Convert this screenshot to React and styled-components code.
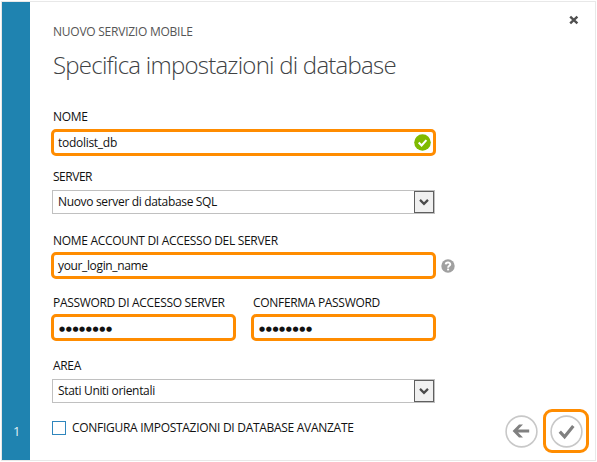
import React from 'react';
import styled, { createGlobalStyle } from 'styled-components';

const GlobalStyle = createGlobalStyle`
  *, *::before, *::after { box-sizing: border-box; }
  body {
    margin: 0;
    background: #fff;
    color: #111;
    font: 12px/16px "Open Sans", "Noto Sans", sans-serif;
    letter-spacing: -0.29px;
  }
  svg { flex: none; }
`;

const Dialog = styled.main`
  display: grid;
  grid-template-columns: 28px 426px 1fr;
  width: 595px;
  height: 460px;
  margin: 1px;
  border: 1px solid #e8e8e8;
`;

const StepRail = styled.aside`
  display: flex;
  align-items: flex-end;
  justify-content: center;
  padding: 0 0 21px 1px;
  background: #1f83b0;
  color: #e2f0f6;
  font-size: 13px;
`;

const Form = styled.form`
  padding: 22px 0 0 21px;
`;

const Eyebrow = styled.div`
  padding-left: 2px;
  color: #555;
  letter-spacing: -0.24px;
`;

const Title = styled.h1`
  margin: 9px 0 28px;
  padding-left: 2px;
  color: #404244;
  font-size: 24px;
  font-weight: 300;
  line-height: 32px;
  letter-spacing: -0.76px;
  white-space: nowrap;
`;

const Group = styled.div`
  display: flex;
  flex-direction: column;
  gap: ${(p) => p.$gap}px;
  width: ${(p) => p.$width || 385}px;
  margin-top: ${(p) => p.$top || 0}px;
`;

const Columns = styled.div`
  display: flex;
  gap: 15px;
  margin-top: 16px;
`;

const Label = styled.label`
  padding-left: 2px;
  white-space: nowrap;
  letter-spacing: ${(p) => p.$tracking || -0.31}px;
`;

const FieldRow = styled.div`
  display: flex;
  align-items: center;
  gap: 5px;
`;

const Field = styled.div`
  display: flex;
  flex: none;
  align-items: center;
  justify-content: space-between;
  width: 100%;
  height: 27px;
  padding: 0 2px 0 4px;
  border: 3px solid #ff8c00;
  border-radius: 5px;
  letter-spacing: ${(p) => p.$tracking || -0.28}px;
`;

const Dots = styled.span`
  padding: 2px 0 0 1px;
  font: 7px/20px "DejaVu Sans", sans-serif;
  letter-spacing: 0.6px;
`;

const Select = styled.div`
  display: flex;
  justify-content: space-between;
  width: 383px;
  height: 24px;
  margin-left: 1px;
  padding-left: 5px;
  border: 1px solid #c0c0c0;
  line-height: 21px;
  letter-spacing: -0.33px;
`;

const DropButton = styled.span`
  display: grid;
  place-items: center;
  width: 20px;
  height: 22px;
  border: 1px solid #5f5f5f;
  background: #f0f0f0;
`;

const CheckRow = styled.div`
  display: flex;
  gap: 6px;
  margin-top: 17px;
  padding-left: 1px;
  white-space: nowrap;
`;

const Checkbox = styled.span`
  width: 14px;
  height: 14px;
  margin-top: 1px;
  border: 1px solid #2f86bd;
`;

const Controls = styled.div`
  display: flex;
  flex-direction: column;
  align-items: flex-end;
  justify-content: space-between;
  padding: 13px 6px 7px 0;
`;

const CloseButton = styled.span`
  display: flex;
  margin-right: 10px;
`;

const Navigation = styled.div`
  display: flex;
  align-items: center;
  gap: 5px;
`;

const Highlight = styled.div`
  display: grid;
  place-items: center;
  width: 46px;
  height: 44px;
  border: 3px solid #ff8c00;
  border-radius: 9px;
`;

const ValidIcon = () => (
  <svg width="17" height="17" viewBox="0 0 17 17">
    <circle cx="8.5" cy="8.5" r="8.3" fill="#7fba00" />
    <path d="M4.7 8.5l2.9 2.9 4.8-5.3" fill="none" stroke="#fff" strokeWidth="2.1" />
  </svg>
);

const HelpIcon = () => (
  <svg width="14" height="14" viewBox="0 0 14 14">
    <circle cx="7" cy="7" r="6.7" fill="#a0a0a0" />
    <path d="M4.7 5.4C4.8 2.9 9.3 2.9 9.3 5.3 9.3 6.8 7.1 6.8 7.1 8.7" fill="none" stroke="#fff" strokeWidth="1.9" />
    <path d="M6.1 9.6h2v1.8h-2z" fill="#fff" />
  </svg>
);

const Chevron = () => (
  <svg width="10" height="8" viewBox="0 0 10 8">
    <path d="M1 1.9l4 4 4-4" fill="none" stroke="#4a4a4a" strokeWidth="2.2" />
  </svg>
);

const CloseIcon = () => (
  <svg width="10" height="10" viewBox="0 0 10 10">
    <path d="M1.2 1.6l7.2 6.8M8.4 1.6l-7.2 6.8" stroke="#505050" strokeWidth="2.4" />
  </svg>
);

const RoundIcon = ({ children }) => (
  <svg width="33" height="33" viewBox="0 0 33 33" fill="none">
    <circle cx="16.5" cy="16.5" r="15.4" stroke="#c8c8c8" strokeWidth="1.6" />
    {children}
  </svg>
);

function Picker({ value }) {
  return (
    <Select>
      <span>{value}</span>
      <DropButton><Chevron /></DropButton>
    </Select>
  );
}

export default function App() {
  return (
    <>
      <GlobalStyle />
      <Dialog>
        <StepRail>1</StepRail>
        <Form>
          <Eyebrow>NUOVO SERVIZIO MOBILE</Eyebrow>
          <Title>Specifica impostazioni di database</Title>
          <Group $gap={4}>
            <Label>NOME</Label>
            <Field>todolist_db<ValidIcon /></Field>
          </Group>
          <Group $gap={5} $top={13}>
            <Label $tracking={-0.48}>SERVER</Label>
            <Picker value="Nuovo server di database SQL" />
          </Group>
          <Group $gap={3} $top={19}>
            <Label>NOME ACCOUNT DI ACCESSO DEL SERVER</Label>
            <FieldRow>
              <Field $tracking={-0.36}>your_login_name</Field>
              <HelpIcon />
            </FieldRow>
          </Group>
          <Columns>
            <Group $gap={3} $width={185}>
              <Label>PASSWORD DI ACCESSO SERVER</Label>
              <FieldRow><Field><Dots>●●●●●●●●</Dots></Field></FieldRow>
            </Group>
            <Group $gap={3} $width={185}>
              <Label>CONFERMA PASSWORD</Label>
              <FieldRow><Field><Dots>●●●●●●●●</Dots></Field></FieldRow>
            </Group>
          </Columns>
          <Group $gap={5} $top={17}>
            <Label>AREA</Label>
            <Picker value="Stati Uniti orientali" />
          </Group>
          <CheckRow>
            <Checkbox />
            <span>CONFIGURA IMPOSTAZIONI DI DATABASE AVANZATE</span>
          </CheckRow>
        </Form>
        <Controls>
          <CloseButton><CloseIcon /></CloseButton>
          <Navigation>
            <RoundIcon>
              <path
                d="M7.6 16L14 9.6h4L13.1 14.5H24.2v3H13.1L18 22.4h-4z"
                fill="#808080"
              />
            </RoundIcon>
            <Highlight>
              <RoundIcon>
                <path d="M9.8 16.6l4.8 5.2L23.3 11" stroke="#808080" strokeWidth="3.2" />
              </RoundIcon>
            </Highlight>
          </Navigation>
        </Controls>
      </Dialog>
    </>
  );
}
